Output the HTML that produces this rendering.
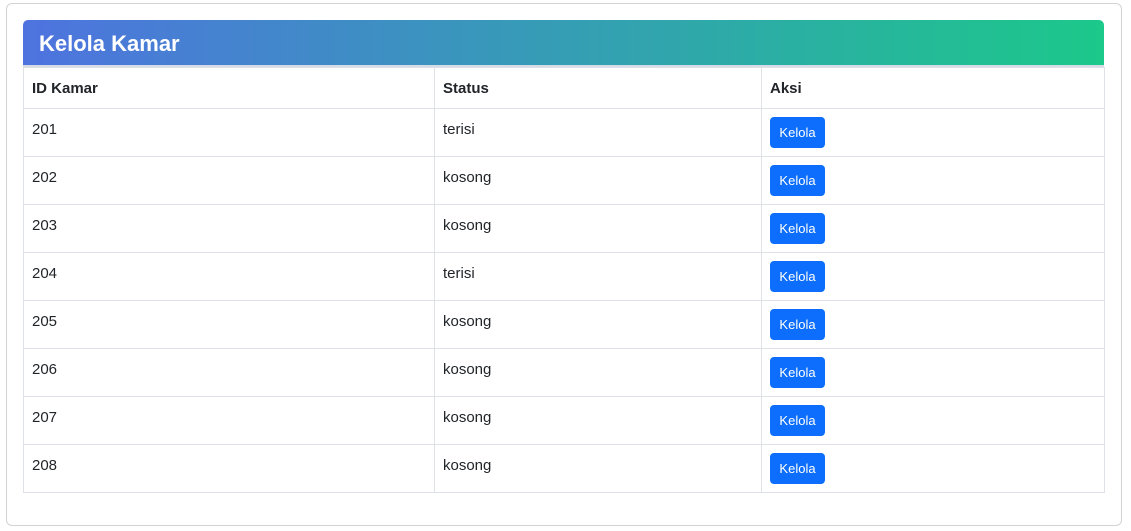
<!DOCTYPE html><html><head><style>
body{margin:0;background:#fff;font-family:"Liberation Sans",sans-serif;}
.card{position:absolute;left:6px;top:3px;width:1114px;height:521px;border:1px solid #d3d3d3;border-radius:6px;}
.hd{position:absolute;left:23px;top:20px;width:1081px;height:47px;border-radius:5px 5px 0 0;background:linear-gradient(90deg,#4e73df,#1cc88a);border-bottom:2px solid #d6dbe8;color:#fff;font-size:22px;font-weight:bold;line-height:47px;padding-left:16px;box-sizing:border-box;}
table{position:absolute;left:23px;top:67px;border-collapse:collapse;width:1082px;font-size:15px;color:#212529;table-layout:fixed}
td,th{border:1px solid #dee2e6;padding:0 8px;text-align:left;vertical-align:top;}
th{height:39px;line-height:39px;padding-top:1px;box-sizing:border-box;font-weight:bold}
td{height:47px;line-height:42px}
td.b{line-height:normal}
.btn{display:inline-block;margin-top:8px;background:#0d6efd;color:#fff;font-size:13px;width:55px;height:31px;line-height:31px;text-align:center;border-radius:4px;}
</style></head><body>
<div class="card"></div>
<div class="hd">Kelola Kamar</div>
<table>
<colgroup><col style="width:411px"><col style="width:327px"><col></colgroup>
<tr><th>ID Kamar</th><th>Status</th><th>Aksi</th></tr>
<tr><td>201</td><td>terisi</td><td class="b"><span class="btn">Kelola</span></td></tr>
<tr><td>202</td><td>kosong</td><td class="b"><span class="btn">Kelola</span></td></tr>
<tr><td>203</td><td>kosong</td><td class="b"><span class="btn">Kelola</span></td></tr>
<tr><td>204</td><td>terisi</td><td class="b"><span class="btn">Kelola</span></td></tr>
<tr><td>205</td><td>kosong</td><td class="b"><span class="btn">Kelola</span></td></tr>
<tr><td>206</td><td>kosong</td><td class="b"><span class="btn">Kelola</span></td></tr>
<tr><td>207</td><td>kosong</td><td class="b"><span class="btn">Kelola</span></td></tr>
<tr><td>208</td><td>kosong</td><td class="b"><span class="btn">Kelola</span></td></tr>
</table>
</body></html>
